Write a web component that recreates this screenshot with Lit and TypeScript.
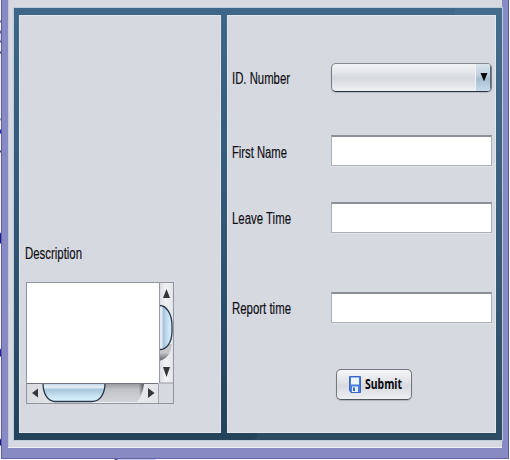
import { LitElement, html, css, svg } from "lit";
import { customElement, property } from "lit/decorators.js";

/** Label in a horizontally condensed sans, fitted to a given width. */
@customElement("narrow-label")
class NarrowLabel extends LitElement {
  @property() text = "";
  @property({ type: Number }) width = 60;
  @property({ type: Number }) size = 16;
  @property({ type: Boolean }) bold = false;
  static styles = css`
    :host { display: block; height: 20px; }
    svg { display: block; overflow: visible; }
    text { font-family: "Liberation Sans", Arial, sans-serif; fill: #0c0c12; stroke: #0c0c12; stroke-width: 0.15px; }
    .bold { font-family: "Noto Sans", "Open Sans", sans-serif; font-weight: 700; fill: #08080c; stroke: none; }
  `;
  render() {
    return html`<svg width=${this.width} height="20">
      ${svg`<text class=${this.bold ? "bold" : ""} x="0" y="15" font-size=${this.size} textLength=${this.width} lengthAdjust="spacingAndGlyphs">${this.text}</text>`}
    </svg>`;
  }
}

@customElement("text-area")
class TextArea extends LitElement {
  static styles = css`
    :host { display: block; width: 148px; height: 122px; }
    svg { display: block; }
  `;
  render() {
    return html`<svg width="148" height="122" viewBox="0 0 148 122">
      <defs>
        <linearGradient id="v"><stop offset="0" stop-color="#e7eef6"/><stop offset=".25" stop-color="#dce9f4"/><stop offset=".3" stop-color="#a5c0d6"/><stop offset=".65" stop-color="#c5e0f2"/><stop offset="1" stop-color="#d9f2ff"/></linearGradient>
        <linearGradient id="h" x2="0" y2="1"><stop offset="0" stop-color="#b5cce0"/><stop offset=".22" stop-color="#e8f1f8"/><stop offset=".36" stop-color="#a9c6da"/><stop offset=".7" stop-color="#c7e2f2"/><stop offset="1" stop-color="#dcf6ff"/></linearGradient>
        <linearGradient id="t" x2="0" y2="1"><stop offset="0" stop-color="#9a9ca0"/><stop offset=".3" stop-color="#c0c2c6"/><stop offset="1" stop-color="#d2d4d9"/></linearGradient>
        <linearGradient id="e"><stop offset="0" stop-color="#3a3c40" stop-opacity="0"/><stop offset="1" stop-color="#3a3c40" stop-opacity=".8"/></linearGradient>
        <linearGradient id="u" x2="0" y2="1"><stop offset=".5" stop-color="#c6c8cc"/><stop offset="1" stop-color="#5a5c60"/></linearGradient>
        <linearGradient id="b"><stop offset="0" stop-color="#d9dbdf"/><stop offset=".5" stop-color="#f1f2f4"/><stop offset="1" stop-color="#e2e4e8"/></linearGradient>
      </defs>
      <rect x=".5" y=".5" width="147" height="121" fill="#d6d9df" stroke="#9395a0"/>
      <rect x="133" y="1" width="14" height="100" fill="url(#b)"/>
      <path d="M133 62H146Q145 76 133 79Z" fill="url(#u)"/>
      <path d="M133 23.5C141 23 146 33 146 44V49C146 60 141 68 133 67.5Z" fill="url(#v)"/>
      <path d="M133 23.5C141 23 146 33 146 44V49C146 60 141 68 133 67.5" fill="none" stroke="#28384a" stroke-width="1.3"/>
      <path d="M133.5 1V101H147" fill="none" stroke="#9698a2"/>
      <path d="M137 16L140.5 7L144 16ZM137 85L140.5 95L144 85Z" fill="#33363b"/>
      <rect x="1" y="101" width="132" height="20" fill="url(#b)"/>
      <path d="M76 102H117.5Q118 113 111 120H70Z" fill="url(#t)"/>
      <path d="M113 102H118Q117 110 113 115Z" fill="url(#e)"/>
      <path d="M17 101C17 112 22 119.5 29 119.5H66C74 119.5 79 112 79 101Z" fill="url(#h)" stroke="#28384a" stroke-width="1.3"/>
      <path d="M6 111L12 106.5V115.5ZM128.5 111L122 106V116Z" fill="#33363b"/>
      <rect x="1" y="1" width="132" height="100" fill="#fff"/>
      <path d="M1 101.5H133" stroke="#70747c"/>
      <path d="M132.5 101V121" stroke="#a4a6ae"/>
    </svg>`;
  }
}

@customElement("combo-box")
class ComboBox extends LitElement {
  static styles = css`
    :host { display: block; height: 29px; }
    .box { box-sizing: border-box; height: 29px; display: flex; border: 1px solid #777b84; border-top-color: #85888f; border-bottom: 1.5px solid #28323f; border-radius: 5px; overflow: hidden; box-shadow: 0 1px 1px #b6b9c2;
      background: linear-gradient(#f2f3f5, #e4e6ea 30%, #d5d8de 52%, #e9ebef 90%, #f0f2f5); }
    .face { flex: 1; }
    .arrow { width: 15px; border-left: 1px solid #f0f3f6; background: linear-gradient(#dbe4ec, #bfd0de 40%, #a6bfd1 55%, #c7dce9); box-shadow: inset -1px 0 #566a7e; }
    svg { display: block; }
  `;
  render() {
    return html`<div class="box"><div class="face"></div><div class="arrow"><svg width="15" height="27"><path d="M4.5 9H11.5L8 17.5Z" fill="#0a0a0c"/></svg></div></div>`;
  }
}

@customElement("app-root")
class AppRoot extends LitElement {
  static styles = css`
    :host { display: block; width: 510px; height: 460px; overflow: hidden; background: #fff; }
    .screen { display: grid; grid-template-columns: 1px 508px 1px; grid-template-rows: 459px 1px; }
    .behind { background: linear-gradient(#f2f2fa 20px, #6668a8 21px 22px, #f4f4fc 23px 30px, #65629c 31px 33px, #d4d6ec 34px 40px, #546490 41px 42px, #f0f0fa 43px 51px, #404070 52px 53px, #ececf8 54px 118px, #66699c 119px, #f2f2fa 121px 129px, #2a28a0 130px 133px, #f0f0fa 134px 150px, #404070 151px 152px, #f2f2fa 153px 232px, #1a1a9a 234px 243px, #f5f5fa 244px 348px, #2420a0 350px 356px, #f0f0fa 357px 438px, #1a1a88 440px 445px, #f0f0fa 446px); }
    .window { box-sizing: border-box; height: 459px; padding: 0 7px 11px 6px; border-right: 1px solid #5a5a94; border-left: 1px solid #5e60a0; border-bottom: 1px solid #6264a4; background: #888ac4; }
    .client { box-sizing: border-box; height: 448px; margin-right: -1px; padding: 8px 0 8px 6px; background: #d6d9df; box-shadow: inset 0 -1px #eeeff5, inset 1px 0 #c6c8da; }
    .frame { box-sizing: border-box; height: 432px; padding: 7px 6px 7px 5px; display: grid; grid-template-columns: 202px 1fr; column-gap: 6px;
      background: linear-gradient(115deg, transparent 64%, #ffffff0b 64.3%), linear-gradient(#3e6789, #315674 50%, #24435b); box-shadow: 0 0 0 1px #bdcbd8; }
    .pane { background: #d6d9df; box-shadow: inset 0 0 0 1px #e3e7ed; }
    .left { padding: 229px 0 0 6px; }
    .left text-area { margin: 18px 0 0 1px; }
    .right { display: grid; grid-template-columns: 99px 161px; grid-template-rows: 72px 67px 90px 77px 32px; padding: 48px 0 0 5px; }
    .right > narrow-label { padding-top: 7px; }
    .right > narrow-label.combo { padding-top: 6px; }
    .right > narrow-label.first { padding-top: 8px; }
    .field { box-sizing: border-box; height: 31px; background: #fff; border: 1px solid #adb0b8; border-top: 2px solid #8c8f97; box-shadow: 0 1px #e0e3e8; }
    .submit { grid-column: 2; box-sizing: border-box; margin-left: 5px; width: 76px; height: 31px; display: flex; align-items: center; padding: 0 0 0 12px; gap: 4px; border: 1px solid #74777f; border-bottom: 1.5px solid #50545c; border-radius: 5px; background: linear-gradient(#f4f5f7, #e6e8ec 30%, #d8dae0 55%, #edeff2); box-shadow: 0 1px 1px #b0b3bb; }
    .submit narrow-label { margin-top: -2px; }
    .under { grid-column: 1 / -1; background: linear-gradient(90deg, #fff 114px, #555 115px 117px, #c8c8ec 118px 155px, #fff 156px); }
  `;
  render() {
    return html`<div class="screen">
      <div class="behind"></div>
      <div class="window"><div class="client"><div class="frame">
        <div class="pane left">
          <narrow-label text="Description" width="57"></narrow-label>
          <text-area></text-area>
        </div>
        <div class="pane right">
          <narrow-label class="combo" text="ID. Number" width="58"></narrow-label><combo-box></combo-box>
          <narrow-label class="first" text="First Name" width="55"></narrow-label><div class="field"></div>
          <narrow-label text="Leave Time" width="59"></narrow-label><div class="field"></div>
          <narrow-label text="Report time" width="59"></narrow-label><div class="field"></div>
          <div class="submit">
            <svg width="12" height="17" viewBox="0 0 12 17">
              <path d="M.5.5H11.5V16.5H2L.5 14.5Z" fill="#4a7de0" stroke="#3b66c8"/>
              <path d="M2 1.5H10V8.5H2Z" fill="#eef6ff"/><path d="M3 10.5H9V16H3Z" fill="#e8effa"/><path d="M4 11.5H6V15H4Z" fill="#3b66c8"/>
            </svg>
            <narrow-label text="Submit" width="37" size="14.5" bold></narrow-label>
          </div>
        </div>
      </div></div></div>
      <div></div>
      <div class="under"></div>
    </div>`;
  }
}
